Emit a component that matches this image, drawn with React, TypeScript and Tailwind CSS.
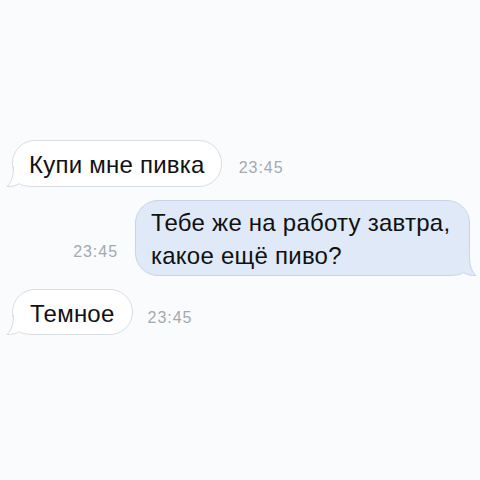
import type { ReactNode } from 'react';

type Side = 'in' | 'out';

// Little curved tail at the bottom corner of a bubble
function Tail({ side }: { side: Side }) {
  const fill = side === 'in' ? '#ffffff' : '#dfe9f8';
  const stroke = side === 'in' ? '#d9dde2' : '#c8d5e6';
  const outline = 'M7.5 0 C7.5 9 5.5 15.5 1 19.5 C6 19.8 10 18.6 13.5 16.6 C16 18.6 20 19.5 32 19.5';
  return (
    <svg
      width="32"
      height="21"
      viewBox="0 0 32 21"
      className={
        side === 'in'
          ? 'absolute bottom-[-1.5px] left-[-7.5px]'
          : 'absolute bottom-[-1.5px] right-[-7.5px] -scale-x-100'
      }
    >
      <path d={outline + ' L32 0 Z'} fill={fill} />
      <path d={outline} fill="none" stroke={stroke} strokeWidth="1" />
    </svg>
  );
}

function Bubble({ side, children, className }: { side: Side; children: ReactNode; className?: string }) {
  return (
    <div
      className={
        'relative rounded-[23px] border ' +
        (side === 'in' ? 'border-[#d9dde2] bg-white ' : 'border-[#c8d5e6] bg-[#dfe9f8] ') +
        (className ?? '')
      }
    >
      <Tail side={side} />
      <div className="relative text-[24px] tracking-[0.01em]">{children}</div>
    </div>
  );
}

function Time({ className }: { className?: string }) {
  return (
    <span className={'text-[16px] leading-none tracking-[0.06em] text-[#a3a9b0] ' + (className ?? '')}>
      23:45
    </span>
  );
}

export default function App() {
  return (
    <div
      className="flex h-[480px] w-[480px] flex-col gap-[13px] bg-[#fafbfc] pt-[140px] text-[#111]"
      style={{ fontFamily: '"Liberation Sans", Arial, sans-serif' }}
    >
      <div className="flex items-center gap-[17px] pl-[12px]">
        <Bubble side="in" className="h-[47px] px-[16px] pt-[6px]">
          <span className="leading-[28px]">Купи мне пивка</span>
        </Bubble>
        <Time className="mt-[9px]" />
      </div>

      <div className="flex items-end justify-end gap-[17px] pr-[10px]">
        <div className="pb-[12px]">
          <Time />
        </div>
        <Bubble side="out" className="h-[76px] w-[335px] px-[15px] pt-[5px]">
          <div className="leading-[33px]">
            Тебе же на работу завтра,
            <br />
            какое ещё пиво?
          </div>
        </Bubble>
      </div>

      <div className="flex items-center gap-[15px] pl-[12px]">
        <Bubble side="in" className="h-[46px] px-[17px] pt-[6px]">
          <span className="leading-[28px]">Темное</span>
        </Bubble>
        <Time className="mt-[12px]" />
      </div>
    </div>
  );
}
